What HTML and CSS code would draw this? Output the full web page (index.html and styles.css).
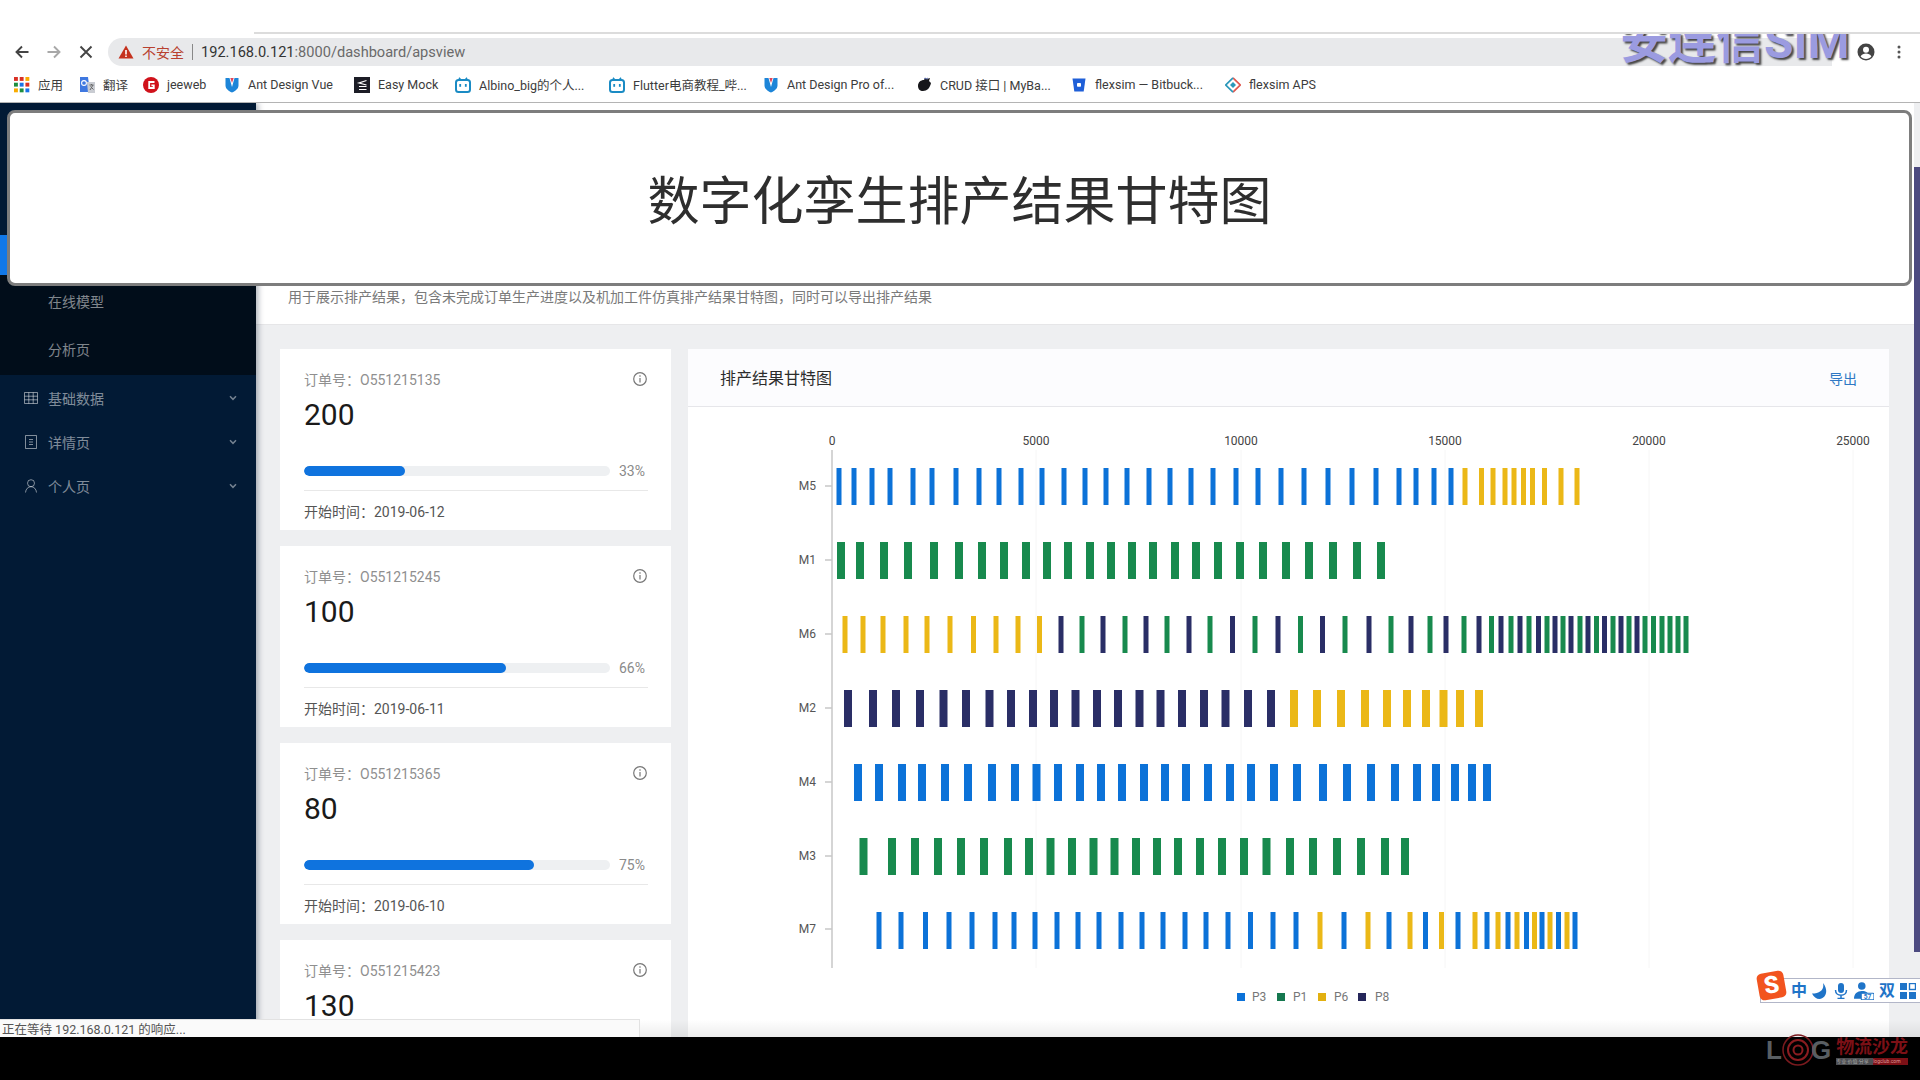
FILE: index.html
```html
<!DOCTYPE html>
<html lang="zh-CN">
<head>
<meta charset="utf-8">
<title>数字化孪生排产结果甘特图</title>
<link rel="stylesheet" href="styles.css">
</head>
<body>
<div class="frame">
  <header class="chrome">
    <div class="tabstrip"></div>
    <div class="toolbar">
      <svg class="tool" viewBox="0 0 16 16"><path d="M14.5 8H2.5M8 2.5 2.5 8 8 13.5" class="ic-dark"/></svg>
      <svg class="tool" viewBox="0 0 16 16"><path d="M1.5 8h12M8 2.5 13.5 8 8 13.5" class="ic-grey"/></svg>
      <svg class="tool" viewBox="0 0 16 16"><path d="M2.5 2.5l11 11M13.5 2.5l-11 11" class="ic-dark"/></svg>
      <div class="omni">
        <svg class="warn" viewBox="0 0 16 16"><path d="M8 1.5 15.5 14.5H.5Z" fill="#c5321e"/><path d="M7.2 6h1.6v4.6H7.2zM7.2 11.4h1.6V13H7.2z" fill="#fff"/></svg>
        <span class="insecure">不安全</span>
        <span class="sep"></span>
        <span class="url">192.168.0.121<span class="url-rest">:8000/dashboard/apsview</span></span>
      </div>
      <svg class="avatar" viewBox="0 0 18 18"><circle cx="9" cy="9" r="8.5" fill="#444"/><circle cx="9" cy="6.8" r="3" fill="#fff"/><path d="M3.6 13.6c1.2-2.2 3.2-3 5.4-3s4.2.8 5.4 3c-1.3 1.5-3.2 2.4-5.4 2.4s-4.1-.9-5.4-2.4Z" fill="#fff"/></svg>
      <svg class="dots" viewBox="0 0 4 16"><circle cx="2" cy="3" r="1.5"/><circle cx="2" cy="8" r="1.5"/><circle cx="2" cy="13" r="1.5"/></svg>
    </div>
    <nav class="bookmarks">
      <a class="bm"><svg class="bi" viewBox="0 0 14 14"><g><rect x="0" y="0" width="3.4" height="3.4" fill="#d93025"/><rect x="5" y="0" width="3.4" height="3.4" fill="#d93025"/><rect x="10" y="0" width="3.4" height="3.4" fill="#f9ab00"/><rect x="0" y="5" width="3.4" height="3.4" fill="#1e8e3e"/><rect x="5" y="5" width="3.4" height="3.4" fill="#1a73e8"/><rect x="10" y="5" width="3.4" height="3.4" fill="#d93025"/><rect x="0" y="10" width="3.4" height="3.4" fill="#f9ab00"/><rect x="5" y="10" width="3.4" height="3.4" fill="#1e8e3e"/><rect x="10" y="10" width="3.4" height="3.4" fill="#1a73e8"/></g></svg>应用</a>
      <a class="bm"><svg class="bi" viewBox="0 0 16 16"><path d="M1 0h8l2 15H1Z" fill="#3f78e0"/><path d="M8 5h8v11H9Z" fill="#c9ccd2"/><path d="M10.5 8h4M12.5 7v1M11 13l3-5M11.5 9.5l3 3" stroke="#666" stroke-width="1" fill="none"/><circle cx="5" cy="6" r="2.4" fill="none" stroke="#fff" stroke-width="1.1"/></svg>翻译</a>
      <a class="bm"><svg class="bi" viewBox="0 0 16 16"><circle cx="8" cy="8" r="8" fill="#d0121b"/><path d="M11.5 5H6.2v6h4.6V8.3H8.4" fill="none" stroke="#fff" stroke-width="1.8"/></svg>jeeweb</a>
      <a class="bm"><svg class="bi" viewBox="0 0 16 16"><path d="M1.5 1h4l2.500 9 2.500-9h4v7.500c0 3-3 5.500-6.500 7-3.500-1.500-6.500-4-6.500-7Z" fill="#1d85d8"/><path d="M6.3 1h3.400L8 6Z" fill="#e0455c"/></svg>Ant Design Vue</a>
      <a class="bm"><svg class="bi" viewBox="0 0 16 16"><rect width="16" height="16" fill="#1c1d26"/><path d="M12.5 3.500 5 6l7.500 2M5 9.500h7.500M5 12.500h7.500" fill="none" stroke="#fff" stroke-width="1.2"/></svg>Easy Mock</a>
      <a class="bm bm-clip"><svg class="bi" viewBox="0 0 16 16"><path d="M4 .8l2 2.500M12 .8l-2 2.500" stroke="#1a8bc4" stroke-width="1.5"/><rect x="1" y="3" width="14" height="12" rx="2.5" fill="none" stroke="#1a8bc4" stroke-width="2"/><rect x="4.3" y="7" width="1.8" height="2.8" fill="#1a8bc4"/><rect x="9.9" y="7" width="1.8" height="2.8" fill="#1a8bc4"/></svg>Albino_big的个人...</a>
      <a class="bm bm-clip"><svg class="bi" viewBox="0 0 16 16"><path d="M4 .8l2 2.500M12 .8l-2 2.500" stroke="#1a8bc4" stroke-width="1.5"/><rect x="1" y="3" width="14" height="12" rx="2.5" fill="none" stroke="#1a8bc4" stroke-width="2"/><rect x="4.3" y="7" width="1.8" height="2.8" fill="#1a8bc4"/><rect x="9.9" y="7" width="1.8" height="2.8" fill="#1a8bc4"/></svg>Flutter电商教程_哔...</a>
      <a class="bm bm-clip"><svg class="bi" viewBox="0 0 16 16"><path d="M1.5 1h4l2.500 9 2.500-9h4v7.500c0 3-3 5.500-6.500 7-3.500-1.500-6.500-4-6.500-7Z" fill="#1d85d8"/><path d="M6.3 1h3.400L8 6Z" fill="#e0455c"/></svg>Ant Design Pro of...</a>
      <a class="bm bm-clip"><svg class="bi" viewBox="0 0 16 16"><path d="M2 9c0-4 3-6 6-6l1-2 2 1 3-1-1 3 2 2c-1 5-4 8-8 8-3 0-5-2-5-5Z" fill="#16161a"/><path d="M8 2l1-1.500 1.500 1 1-1 .5 2Z" fill="#5a6aa8"/></svg>CRUD 接口 | MyBa...</a>
      <a class="bm bm-clip"><svg class="bi" viewBox="0 0 16 16"><path d="M1.5 1.500h13l-1.800 13H3.300Z" fill="#1f5fd8"/><rect x="6" y="6" width="4" height="3.8" rx=".8" fill="#fff"/></svg>flexsim — Bitbuck...</a>
      <a class="bm"><svg class="bi" viewBox="0 0 16 16"><path d="M8 .8 15.200 8 8 15.200" fill="none" stroke="#e0574f" stroke-width="1.7"/><path d="M8 .8.800 8 8 15.200" fill="none" stroke="#2b98ba" stroke-width="1.7"/><path d="M8 5l3 3-3 3-3-3Z" fill="#2b98ba"/></svg>flexsim APS</a>
    </nav>
  </header>

  <div class="page">
    <aside class="sidebar">
      <div class="menu-active"></div>
      <ul class="submenu">
        <li class="subitem">在线模型</li>
        <li class="subitem">分析页</li>
      </ul>
      <ul class="menu">
        <li class="menuitem">
          <svg class="mi" viewBox="0 0 14 12"><path d="M.5.5h13v11H.5ZM.5 4.200h13M.5 7.800h13M4.800.5v11M9.200.5v11"/></svg>
          <span class="mt">基础数据</span>
          <svg class="chev" viewBox="0 0 8 6"><path d="M1 1.200 4 4.300 7 1.200"/></svg>
        </li>
        <li class="menuitem">
          <svg class="mi" viewBox="0 0 14 14"><path d="M1.500.5h11v13h-11ZM5 4.500h4M5 7h4M5 9.500h4"/></svg>
          <span class="mt">详情页</span>
          <svg class="chev" viewBox="0 0 8 6"><path d="M1 1.200 4 4.300 7 1.200"/></svg>
        </li>
        <li class="menuitem">
          <svg class="mi" viewBox="0 0 14 14"><circle cx="7" cy="4.200" r="3.500"/><path d="M1.500 13.500c.3-3.500 2.500-5.800 5.500-5.800s5.200 2.300 5.500 5.800"/></svg>
          <span class="mt">个人页</span>
          <svg class="chev" viewBox="0 0 8 6"><path d="M1 1.200 4 4.300 7 1.200"/></svg>
        </li>
      </ul>
    </aside>

    <main class="main">
      <div class="page-head">用于展示排产结果，包含未完成订单生产进度以及机加工件仿真排产结果甘特图，同时可以导出排产结果</div>
      <div class="content">
        <section class="cards">
          <article class="card">
            <div class="card-top"><span>订单号：O551215135</span><svg class="info" viewBox="0 0 14 14"><circle cx="7" cy="7" r="6.300"/><path d="M7 6v4.500M7 3.300v1.400"/></svg></div>
            <div class="card-num">200</div>
            <div class="progress"><div class="track"><div class="fill" style="width:33%"></div></div><span class="pct">33%</span></div>
            <div class="card-foot">开始时间：2019-06-12</div>
          </article>
          <article class="card">
            <div class="card-top"><span>订单号：O551215245</span><svg class="info" viewBox="0 0 14 14"><circle cx="7" cy="7" r="6.300"/><path d="M7 6v4.500M7 3.300v1.400"/></svg></div>
            <div class="card-num">100</div>
            <div class="progress"><div class="track"><div class="fill" style="width:66%"></div></div><span class="pct">66%</span></div>
            <div class="card-foot">开始时间：2019-06-11</div>
          </article>
          <article class="card">
            <div class="card-top"><span>订单号：O551215365</span><svg class="info" viewBox="0 0 14 14"><circle cx="7" cy="7" r="6.300"/><path d="M7 6v4.500M7 3.300v1.400"/></svg></div>
            <div class="card-num">80</div>
            <div class="progress"><div class="track"><div class="fill" style="width:75%"></div></div><span class="pct">75%</span></div>
            <div class="card-foot">开始时间：2019-06-10</div>
          </article>
          <article class="card">
            <div class="card-top"><span>订单号：O551215423</span><svg class="info" viewBox="0 0 14 14"><circle cx="7" cy="7" r="6.300"/><path d="M7 6v4.500M7 3.300v1.400"/></svg></div>
            <div class="card-num">130</div>
          </article>
        </section>

        <section class="chart-card">
          <div class="chart-head"><span class="chart-title">排产结果甘特图</span><a class="export">导出</a></div>
          <svg class="chart" viewBox="688 407 1201 630">
            <path class="grid" d="M1036 450V968M1241 450V968M1445 450V968M1649 450V968M1853 450V968"/>
            <path class="axis" d="M832 450V968M825 486h7M825 560h7M825 634h7M825 708h7M825 782h7M825 856h7M825 929h7"/>
            <g class="ax-x">
              <text x="832" y="445">0</text><text x="1036" y="445">5000</text><text x="1241" y="445">10000</text><text x="1445" y="445">15000</text><text x="1649" y="445">20000</text><text x="1853" y="445">25000</text>
            </g>
            <g class="ax-y">
              <text x="816" y="490">M5</text><text x="816" y="564">M1</text><text x="816" y="638">M6</text><text x="816" y="712">M2</text><text x="816" y="786">M4</text><text x="816" y="860">M3</text><text x="816" y="933">M7</text>
            </g>
            <path class="b5 p3" d="M839 468v37M854 468v37M872 468v37M890 468v37M913 468v37M932 468v37M956 468v37M979 468v37M999 468v37M1021 468v37M1042 468v37M1064 468v37M1085 468v37M1106 468v37M1127 468v37M1149 468v37M1170 468v37M1191 468v37M1213 468v37M1236 468v37M1258 468v37M1281 468v37M1304 468v37M1328 468v37M1352 468v37M1376 468v37M1399 468v37M1416 468v37M1434 468v37M1451 468v37"/>
            <path class="b5 p6" d="M1465 468v37M1481.500 468v37M1493 468v37M1505 468v37M1514 468v37M1523.500 468v37M1532.500 468v37M1544.500 468v37M1561 468v37M1577 468v37"/>
            <path class="b8 p1" d="M841 542v37M860 542v37M884 542v37M908 542v37M934 542v37M959 542v37M982 542v37M1004 542v37M1026 542v37M1047 542v37M1068 542v37M1090 542v37M1111 542v37M1132 542v37M1153 542v37M1175 542v37M1196 542v37M1218 542v37M1240 542v37M1263 542v37M1286 542v37M1309 542v37M1333 542v37M1357 542v37M1381 542v37"/>
            <path class="b5 p6" d="M845 616v37M863 616v37M883 616v37M906 616v37M927 616v37M950 616v37M973.500 616v37M996 616v37M1018 616v37M1039.500 616v37"/>
            <path class="b5 p8" d="M1061 616v37M1103 616v37M1146 616v37M1189 616v37M1232.500 616v37M1278 616v37M1322.500 616v37M1369 616v37M1411 616v37M1446 616v37M1479 616v37M1501 616v37M1520 616v37M1538.500 616v37M1555 616v37M1571 616v37M1588 616v37M1604.500 616v37M1621 616v37M1637 616v37"/>
            <path class="b5 p1" d="M1082 616v37M1125 616v37M1167 616v37M1210 616v37M1255 616v37M1300.500 616v37M1345 616v37M1391 616v37M1430 616v37M1464 616v37M1491.500 616v37M1511 616v37M1529 616v37M1547 616v37M1563 616v37M1580 616v37M1596.500 616v37M1613 616v37M1629 616v37M1645 616v37M1653.500 616v37M1662 616v37M1670 616v37M1678 616v37M1686 616v37"/>
            <path class="b8 p8" d="M848 690v37M873 690v37M896 690v37M920 690v37M943.500 690v37M966 690v37M989.500 690v37M1011 690v37M1033 690v37M1054 690v37M1075.500 690v37M1097 690v37M1118 690v37M1139.500 690v37M1160.500 690v37M1182 690v37M1204 690v37M1225.500 690v37M1248 690v37M1271 690v37"/>
            <path class="b8 p6" d="M1294 690v37M1317 690v37M1341 690v37M1365 690v37M1387 690v37M1407 690v37M1426 690v37M1443.500 690v37M1460 690v37M1479 690v37"/>
            <path class="b8 p3" d="M858 764v37M879 764v37M902 764v37M922 764v37M945 764v37M968 764v37M992 764v37M1015 764v37M1036.500 764v37M1058 764v37M1080 764v37M1101 764v37M1122 764v37M1144 764v37M1165 764v37M1186 764v37M1208 764v37M1230 764v37M1251 764v37M1274 764v37M1297 764v37M1323 764v37M1347 764v37M1371 764v37M1395 764v37M1417 764v37M1436 764v37M1455 764v37M1472 764v37M1487 764v37"/>
            <path class="b8 p1" d="M863.500 838v37M892 838v37M915 838v37M938 838v37M961 838v37M984 838v37M1008 838v37M1029 838v37M1050.500 838v37M1072 838v37M1093.500 838v37M1114.500 838v37M1136 838v37M1157 838v37M1178 838v37M1200 838v37M1222 838v37M1244 838v37M1266.500 838v37M1290 838v37M1313 838v37M1337 838v37M1361 838v37M1385 838v37M1405 838v37"/>
            <path class="b5 p3" d="M879 912v37M901 912v37M925.500 912v37M949 912v37M972 912v37M995 912v37M1014 912v37M1035 912v37M1057 912v37M1078 912v37M1099 912v37M1121 912v37M1142 912v37M1163 912v37M1185 912v37M1206 912v37M1228 912v37M1250.500 912v37M1273 912v37M1296 912v37M1344 912v37M1389 912v37M1425.500 912v37M1458 912v37M1487 912v37M1508 912v37M1526.500 912v37M1542 912v37M1558.500 912v37M1575 912v37"/>
            <path class="b5 p6" d="M1320 912v37M1368 912v37M1410 912v37M1441.500 912v37M1475 912v37M1498 912v37M1517 912v37M1534.500 912v37M1550 912v37M1567 912v37"/>
            <g class="legend">
              <rect x="1237" y="993" width="8" height="8" class="fp3"/><text x="1252" y="1001">P3</text>
              <rect x="1277" y="993" width="8" height="8" class="fp1"/><text x="1293" y="1001">P1</text>
              <rect x="1318" y="993" width="8" height="8" class="fp6"/><text x="1334" y="1001">P6</text>
              <rect x="1358" y="993" width="8" height="8" class="fp8"/><text x="1375" y="1001">P8</text>
            </g>
          </svg>
        </section>
      </div>
    </main>

    <div class="scrollbar"><div class="thumb"></div></div>
  </div>

  <div class="blackband"></div>

  <div class="title-overlay"><h1>数字化孪生排产结果甘特图</h1></div>
  <div class="brand-clip"><span class="brand">安连信SIM</span></div>
  <div class="status">正在等待 192.168.0.121 的响应...</div>
  <div class="bottom-fade"></div>

  <div class="ime">
    <div class="ime-s">S</div>
    <span class="ime-t">中</span>
    <svg class="ime-i" viewBox="0 0 16 16"><path d="M11 0c1.500 6-2.500 10.500-11 10.500C1.500 14 4.500 16 7.500 16 13 16 17.500 8 11 0Z"/></svg>
    <svg class="ime-i" viewBox="0 0 16 16"><rect x="5" y="0" width="6" height="10" rx="3"/><path d="M2.500 7c0 7 11 7 11 0M8 12v3M4.500 15.500h7" fill="none" stroke="#1f74c8" stroke-width="1.5"/></svg>
    <svg class="ime-p" viewBox="0 0 18 16"><circle cx="7" cy="3.500" r="3.400" class="ime-fill"/><path d="M0 15c0-4.500 3-7 7-7s6 2 6.500 3.500H7V15Z" class="ime-fill"/><rect x="6.500" y="10" width="11.500" height="6" rx="1" fill="#fff" stroke="#1f74c8" stroke-width="1"/><text x="12.200" y="15" class="ime-num">57</text></svg>
    <span class="ime-t">双</span>
    <svg class="ime-i" viewBox="0 0 16 16"><rect x="0" y="0" width="7" height="7"/><rect x="9.500" y="0.500" width="6" height="6" fill="none" stroke="#1f74c8" stroke-width="1.4"/><rect x="0" y="9" width="7" height="7"/><rect x="9" y="9" width="7" height="7"/></svg>
  </div>

  <div class="watermark">
    <span class="wm-log">L</span>
    <svg class="wm-o" viewBox="0 0 34 34"><circle cx="17" cy="17" r="15" fill="none" stroke="#7a1a1e" stroke-width="1.5"/><circle cx="17" cy="17" r="10" fill="none" stroke="#8a1c20" stroke-width="2"/><circle cx="17" cy="17" r="4.500" fill="none" stroke="#8a1c20" stroke-width="2"/></svg>
    <span class="wm-log">G</span>
    <div class="wm-right">
      <div class="wm-cn">物流沙龙</div>
      <div class="wm-sub"><span class="wm-a">专业·价值·分享</span><span class="wm-b">logclub.com</span></div>
    </div>
  </div>
</div>
</body>
</html>
```

FILE: styles.css
```css
* { box-sizing: border-box; }
html, body { margin: 0; padding: 0; }
body { font-family: Roboto, "Noto Sans CJK SC", sans-serif; background: #000; }
ul { list-style: none; margin: 0; padding: 0; }
.frame { position: relative; width: 1920px; height: 1080px; overflow: hidden; display: flex; flex-direction: column; background: #fff; }

/* browser chrome */
.chrome { height: 103px; flex: none; background: #fff; border-bottom: 1px solid #b4b4b4; }
.tabstrip { height: 34px; margin-left: 254px; border-bottom: 2px solid #dcdcdc; }
.toolbar { height: 32px; display: flex; align-items: center; padding-left: 14px; gap: 16px; padding-top: 4px; }
.tool { width: 16px; height: 16px; flex: none; }
.tool path { fill: none; stroke-width: 1.9; }
.ic-dark { stroke: #444; }
.ic-grey { stroke: #a8a8a8; }
.omni { width: 1724px; height: 28px; margin-left: -2px; border-radius: 14px 0 0 14px; background: #e8e9eb; display: flex; align-items: center; padding-left: 10px; }
.warn { width: 16px; height: 16px; flex: none; }
.insecure { margin-left: 8px; font-size: 14px; color: #b8412f; }
.sep { width: 1px; height: 16px; background: #888; margin: 0 8px 0 8px; }
.url { font-size: 14.600px; color: #333; white-space: nowrap; }
.url-rest { color: #6a6a6a; }
.avatar { width: 18px; height: 18px; flex: none; margin-left: 9px; }
.dots { width: 4px; height: 16px; flex: none; margin-left: 6px; fill: #555; }
.bookmarks { height: 36px; display: grid; grid-template-columns: 65px 64px 81px 130px 101px 154px 154px 153px 155px 154px auto; align-items: center; padding: 1px 0 0 14px; }
.bm { display: flex; align-items: center; gap: 8px; font-size: 12.500px; color: #3c3c3c; white-space: nowrap; overflow: hidden; }
.bi { width: 16px; height: 16px; flex: none; }

/* app page */
.page { flex: 1; min-height: 0; display: flex; background: #eeeff1; overflow: hidden; }
.sidebar { width: 256px; flex: none; background: #021a35; box-shadow: 2px 0 6px rgba(0, 21, 41, .35); z-index: 1; padding-top: 132px; color: rgba(255, 255, 255, .5); font-size: 14px; }
.menu-active { height: 40px; background: #1178e8; }
.submenu { background: #010d1a; padding: 7px 0 5px; height: 100px; }
.subitem { height: 40px; line-height: 40px; padding-left: 48px; margin-bottom: 8px; }
.menu { padding-top: 3px; }
.menuitem { height: 40px; margin-bottom: 4px; display: flex; align-items: center; padding: 0 19px 0 24px; }
.mi { width: 14px; height: 14px; flex: none; fill: none; stroke: rgba(255, 255, 255, .5); stroke-width: 1; }
.mt { margin-left: 10px; flex: 1; }
.chev { width: 8px; height: 6px; fill: none; stroke: rgba(255, 255, 255, .45); stroke-width: 1.5; }

.main { flex: 1; min-width: 0; display: flex; flex-direction: column; }
.page-head { height: 222px; flex: none; background: #fff; border-bottom: 1px solid #e6e6e8; display: flex; align-items: flex-end; padding: 0 0 17px 32px; font-size: 14px; line-height: 20px; color: #7a7a7a; }
.content { flex: 1; min-height: 0; display: flex; gap: 17px; padding: 24px 25px 0 24px; overflow: hidden; }
.cards { width: 391px; flex: none; display: flex; flex-direction: column; gap: 16px; }
.card { background: #fff; height: 181px; flex: none; padding: 19px 23px 0 24px; }
.card-top { display: flex; justify-content: space-between; align-items: center; height: 22px; font-size: 14px; color: #8f8f8f; }
.info { width: 14px; height: 14px; margin-right: 1px; fill: none; stroke: #777; stroke-width: 1.2; }
.card-num { height: 47px; line-height: 50px; font-size: 30px; color: #1a1a1a; }
.progress { height: 54px; padding-top: 14px; display: flex; align-items: center; border-bottom: 1px solid #e8e8e8; }
.track { width: 306px; height: 10px; border-radius: 5px; background: #eef0f2; overflow: hidden; }
.fill { height: 100%; border-radius: 5px; background: #0f73de; }
.pct { margin-left: 9px; font-size: 14px; color: #8a8a8a; }
.card-foot { padding-top: 10px; line-height: 22px; font-size: 14px; color: #555; }

.chart-card { flex: 1; min-width: 0; background: #fff; display: flex; flex-direction: column; }
.chart-head { height: 58px; flex: none; border-bottom: 1px solid #e6e6ea; display: flex; justify-content: space-between; align-items: center; padding: 0 32px 2px 32px; background: #fcfcfe; }
.chart-title { font-size: 16px; color: #2c2c2c; }
.export { font-size: 14px; color: #2f78c4; padding-top: 2px; }
.chart { width: 1201px; height: 630px; flex: none; display: block; }
.grid { stroke: #f6f6f6; stroke-width: 1; fill: none; }
.axis { stroke: #c8c8c8; stroke-width: 1.5; fill: none; }
.ax-x text { font-size: 12px; fill: #444; text-anchor: middle; }
.ax-y text { font-size: 12px; fill: #555; text-anchor: end; }
.legend text { font-size: 12px; fill: #777; }
.b5 { stroke-width: 5; fill: none; }
.b8 { stroke-width: 8; fill: none; }
.p3 { stroke: #0c72d8; }
.p1 { stroke: #188a4e; }
.p6 { stroke: #ebb817; }
.p8 { stroke: #2a2e66; }
.fp3 { fill: #0c72d8; }
.fp1 { fill: #15784f; }
.fp6 { fill: #e2b010; }
.fp8 { fill: #25265a; }

.scrollbar { width: 6px; flex: none; padding-top: 64px; }
.thumb { height: 785px; background: #4c4a80; }
.blackband { height: 43px; flex: none; background: #000; }

/* things lying over the page */
.title-overlay { position: absolute; left: 7px; top: 110px; width: 1905px; height: 176px; background: #fff; border: 3px solid #7d7d7d; border-radius: 8px; z-index: 5; display: flex; align-items: center; justify-content: center; }
.title-overlay h1 { margin: 10px 0 0; font-size: 52px; line-height: 1.2; font-weight: 400; color: #2e2e2e; }
.brand-clip { position: absolute; left: 1620px; top: 34px; width: 240px; height: 33px; overflow: hidden; z-index: 4; }
.brand { display: block; margin-top: -19px; font-size: 48px; line-height: 54px; font-weight: 700; white-space: nowrap; color: #9b9be0; text-shadow: 2px 2px 2px #444; }
.status { position: absolute; left: 0; top: 1019px; width: 640px; height: 18px; padding-left: 2px; background: #fafafa; border: 1px solid #e2e2e2; border-width: 1px 1px 0 0; font-size: 12.500px; line-height: 19px; color: #555; white-space: nowrap; z-index: 4; }
.bottom-fade { position: absolute; left: 640px; top: 1020px; width: 1280px; height: 17px; background: linear-gradient(to bottom, rgba(0, 0, 0, 0), rgba(0, 0, 0, .07)); z-index: 3; }

.ime { position: absolute; left: 1760px; top: 978px; width: 160px; height: 25px; background: #fff; border: 1px solid #b2b6c8; border-right: 0; padding-left: 30px; display: flex; align-items: center; justify-content: space-between; padding-right: 4px; z-index: 6; }
.ime-s { position: absolute; left: -3px; top: -7px; width: 27px; height: 27px; border-radius: 5px; background: #f2541f; transform: rotate(-10deg); color: #fff; font-weight: 900; font-size: 24px; line-height: 27px; text-align: center; }
.ime-t { font-size: 16px; font-weight: 700; color: #1f74c8; line-height: 20px; }
.ime-i { width: 16px; height: 16px; fill: #1f74c8; }
.ime-p { width: 20px; height: 18px; }
.ime-fill { fill: #1f74c8; }
.ime-num { font-size: 6px; font-weight: 700; fill: #1f74c8; text-anchor: middle; }

.watermark { position: absolute; left: 1766px; top: 1033px; width: 146px; height: 34px; display: flex; align-items: center; z-index: 6; }
.wm-log { font-size: 26px; font-weight: 700; color: #595e62; line-height: 34px; font-family: "Liberation Sans", sans-serif; }
.wm-o { width: 34px; height: 34px; flex: none; margin: 0 -4px 0 -1px; }
.wm-right { margin-left: 5px; display: flex; flex-direction: column; }
.wm-cn { font-size: 18px; line-height: 22px; font-weight: 700; color: #7c1016; white-space: nowrap; }
.wm-sub { display: flex; height: 7px; font-size: 5px; line-height: 7px; white-space: nowrap; }
.wm-a { width: 37px; background: #4c4e52; color: #aaa; overflow: hidden; }
.wm-b { width: 35px; background: #7c1016; color: #d99; overflow: hidden; }
```
